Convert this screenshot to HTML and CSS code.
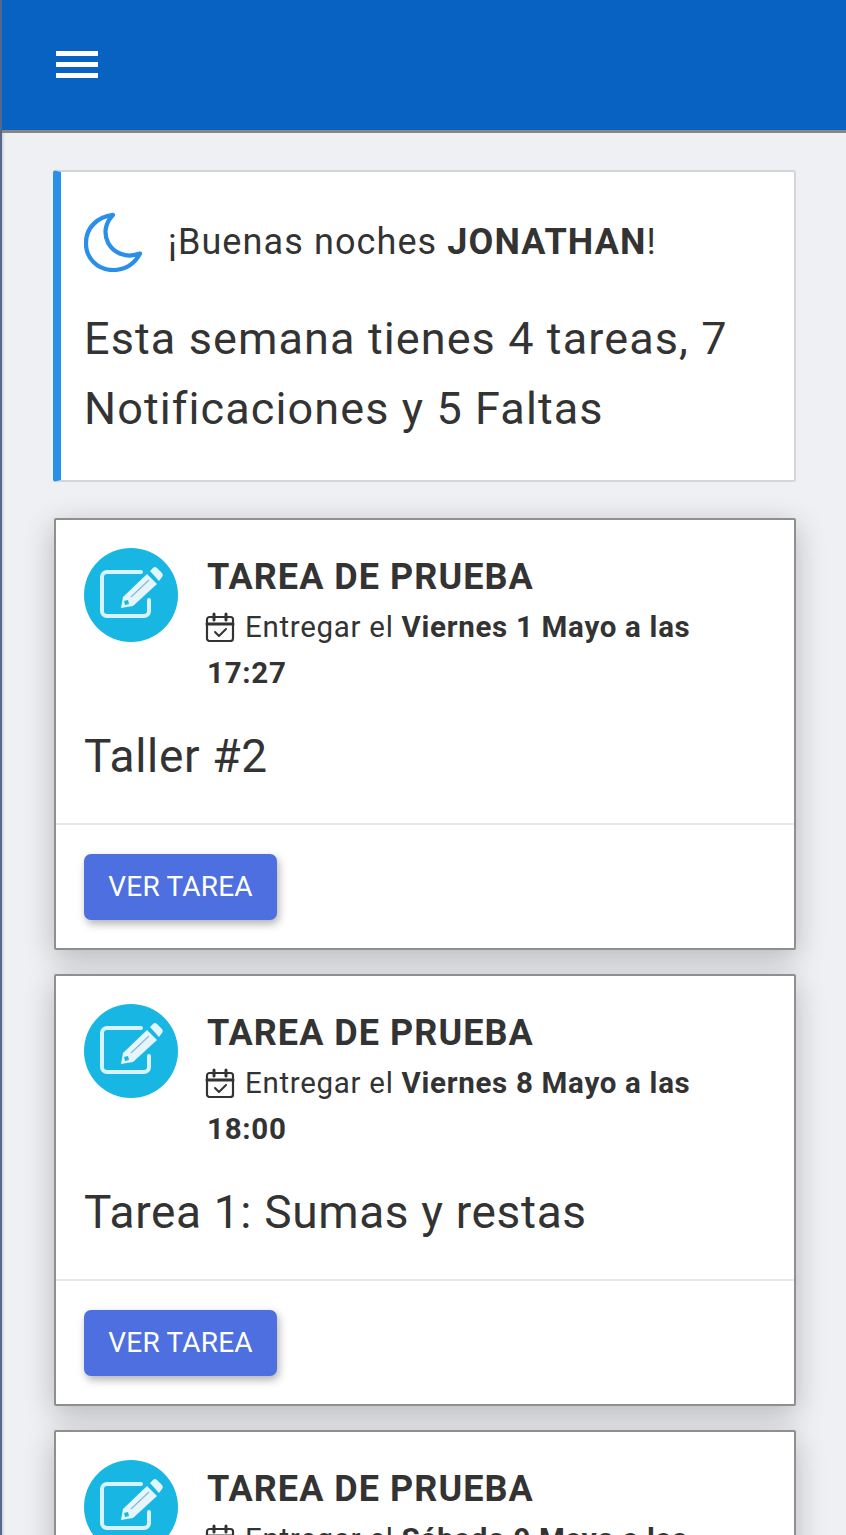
FILE: index.html
```html
<!DOCTYPE html>
<html lang="es">
<head>
    <meta charset="UTF-8">
    <meta name="viewport" content="width=device-width, initial-scale=1.0">
    <title>Inicio</title>
    <link rel="stylesheet" href="styles.css">
</head>
<body>
    <header class="topbar">
        <button class="menu-btn" aria-label="Menu">
            <span></span><span></span><span></span>
        </button>
    </header>
    <main class="content">
        <section class="greeting">
            <div class="greeting-head">
                <svg class="moon" viewBox="0 0 60 62" fill="none" stroke="#2a8fe8" stroke-width="4.4" stroke-linejoin="round">
                    <path d="M30 3 C14 5 2 16 2 32 C2 48 14 60 30 60 C42 60 52 54 58 43 C44 48 31 43 25 32 C20 22 22 11 30 3 Z"/>
                </svg>
                <p>¡Buenas noches <strong>JONATHAN</strong>!</p>
            </div>
            <p class="summary">Esta semana tienes 4 tareas, 7 Notificaciones y 5 Faltas</p>
        </section>

        <article class="task">
            <div class="task-body">
                <div class="task-head">
                    <span class="task-icon">
                        <svg viewBox="0 0 94 94"><use href="#edit-icon"/></svg>
                    </span>
                    <div class="task-info">
                        <h2>TAREA DE PRUEBA</h2>
                        <p class="due"><svg class="cal" viewBox="0 0 30 30"><use href="#cal-icon"/></svg> Entregar el <strong>Viernes 1 Mayo a las</strong> <strong>17:27</strong></p>
                    </div>
                </div>
                <p class="task-name">Taller #2</p>
            </div>
            <div class="task-foot"><a class="btn" href="#">VER TAREA</a></div>
        </article>

        <article class="task">
            <div class="task-body">
                <div class="task-head">
                    <span class="task-icon">
                        <svg viewBox="0 0 94 94"><use href="#edit-icon"/></svg>
                    </span>
                    <div class="task-info">
                        <h2>TAREA DE PRUEBA</h2>
                        <p class="due"><svg class="cal" viewBox="0 0 30 30"><use href="#cal-icon"/></svg> Entregar el <strong>Viernes 8 Mayo a las</strong> <strong>18:00</strong></p>
                    </div>
                </div>
                <p class="task-name">Tarea 1: Sumas y restas</p>
            </div>
            <div class="task-foot"><a class="btn" href="#">VER TAREA</a></div>
        </article>

        <article class="task">
            <div class="task-body">
                <div class="task-head">
                    <span class="task-icon">
                        <svg viewBox="0 0 94 94"><use href="#edit-icon"/></svg>
                    </span>
                    <div class="task-info">
                        <h2>TAREA DE PRUEBA</h2>
                        <p class="due"><svg class="cal" viewBox="0 0 30 30"><use href="#cal-icon"/></svg> Entregar el <strong>Sábado 9 Mayo a las</strong></p>
                    </div>
                </div>
            </div>
        </article>
    </main>

    <svg class="defs" width="0" height="0">
        <defs>
            <g id="edit-icon">
                <path d="M57 24 H23 a5 5 0 0 0 -5 5 V63 a5 5 0 0 0 5 5 H60 a5 5 0 0 0 5 -5 V52" fill="none" stroke="#d8f3fb" stroke-width="4" stroke-linecap="round"/>
                <path d="M37 60 L39 49 L63 26 L73 36 L49 58 Z" fill="#e4f6fc"/>
                <path d="M66 23 L69 20 a3 3 0 0 1 4 0 L78 25 a3 3 0 0 1 0 4 L75 33 Z" fill="#e4f6fc"/>
                <path d="M47 49 L65 32" stroke="#8fb4d8" stroke-width="1.2"/>
                <path d="M40 53 L44 52 L45 56 L41 57 Z" fill="#17b6e3"/>
            </g>
            <g id="cal-icon" fill="none" stroke="#333" stroke-width="2.2" stroke-linejoin="round" stroke-linecap="round">
                <rect x="2" y="5" width="26" height="24" rx="2.5"/>
                <path d="M2 12 H28" stroke-width="3"/>
                <path d="M9 2 V8 M21 2 V8" stroke-width="3"/>
                <path d="M10 20 L14 24 L21 17" stroke-width="2"/>
            </g>
        </defs>
    </svg>
</body>
</html>
```

FILE: styles.css
```css
html, body {
    margin: 0;
    height: 100%;
    overflow: hidden;
}
body {
    font-family: Roboto, "Noto Sans", sans-serif;
    color: #333;
    background: linear-gradient(to right, #b9bcc5 0, #eff0f3 5px) #eff0f3;
    border-left: 2px solid #55678c;
    box-sizing: border-box;
}
.topbar {
    height: 130px;
    background-color: #0762c2;
    border-bottom: 3px solid #8a8684;
    display: flex;
    align-items: center;
    padding-left: 54px;
}
.menu-btn {
    display: flex;
    flex-direction: column;
    gap: 6px;
    padding: 0;
    background: none;
    border: none;
    margin-bottom: 2px;
}
.menu-btn span {
    display: block;
    width: 42px;
    height: 5px;
    background-color: #fff;
}
.content {
    padding: 37px 50px 0 51px;
    display: flex;
    flex-direction: column;
}
.greeting {
    background-color: #fff;
    border: 2px solid #d4d5d8;
    border-left: 8px solid #2a8fe8;
    border-radius: 3px;
    height: 312px;
    box-sizing: border-box;
    padding: 40px 20px 0 23px;
    margin-bottom: 36px;
}
.greeting-head {
    display: flex;
    align-items: center;
    gap: 26px;
    font-size: 36px;
    letter-spacing: 1.1px;
}
.greeting-head p {
    margin: 0;
}
.moon {
    width: 58px;
    height: 60px;
    flex-shrink: 0;
}
.summary {
    margin: 32px 0 0;
    font-size: 45px;
    line-height: 70px;
    letter-spacing: 1.1px;
}
.task {
    background-color: #fff;
    border: 2px solid #8f8f8f;
    border-radius: 2px;
    box-sizing: border-box;
    height: 432px;
    margin-bottom: 24px;
    margin-left: 1px;
    flex-shrink: 0;
    box-shadow: 0 8px 30px rgba(0, 0, 0, 0.24);
}
.task-body {
    height: 305px;
    padding: 28px 24px 0 28px;
    box-sizing: border-box;
    border-bottom: 2px solid #e8e8e8;
}
.task-head {
    display: flex;
    gap: 29px;
}
.task-icon {
    width: 94px;
    height: 94px;
    border-radius: 50%;
    background-color: #17b6e3;
    flex-shrink: 0;
}
.task-icon svg {
    display: block;
    width: 94px;
    height: 94px;
}
.task-info h2 {
    margin: 7px 0 5px;
    font-size: 36px;
    line-height: 44px;
    font-weight: 700;
    letter-spacing: 1.05px;
}
.due {
    margin: 0;
    font-size: 29.5px;
    line-height: 46px;
    letter-spacing: 0.7px;
}
.cal {
    width: 30px;
    height: 30px;
    vertical-align: -5px;
    margin: 0 2px 0 -2px;
}
.task-name {
    margin: 32px 0 0;
    font-size: 46px;
    line-height: 56px;
    letter-spacing: 0.65px;
}
.task-foot {
    padding: 29px 28px;
}
.btn {
    display: block;
    width: 193px;
    height: 66px;
    line-height: 65px;
    text-align: center;
    background-color: #4d6fe0;
    color: #fff;
    font-size: 28px;
    letter-spacing: 0.2px;
    text-decoration: none;
    border-radius: 7px;
    box-shadow: 2px 4px 8px rgba(0, 0, 0, 0.3);
}
.defs {
    position: absolute;
}
```
